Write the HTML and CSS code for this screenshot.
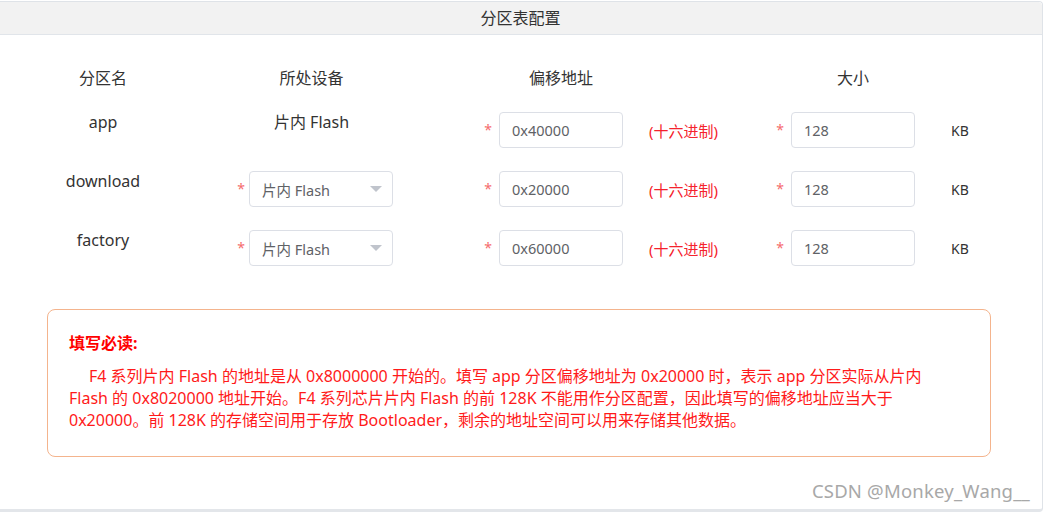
FILE: index.html
```html
<!DOCTYPE html>
<html lang="zh-CN">
<head>
    <meta charset="UTF-8">
    <title>分区表配置</title>
    <link rel="stylesheet" href="styles.css">
</head>
<body>
    <div class="panel">
        <div class="panel-header">分区表配置</div>

        <div class="panel-body">
            <div class="table">
                <!-- header -->
                <div class="th col-name">分区名</div>
                <div class="th col-device">所处设备</div>
                <div class="th col-offset">偏移地址</div>
                <div class="th col-size">大小</div>

                <!-- app -->
                <div class="cell col-name label">app</div>
                <div class="cell col-device label">片内 Flash</div>
                <div class="cell star s-offset">*</div>
                <div class="cell col-offset"><input class="input" value="0x40000"></div>
                <div class="cell hint">(十六进制)</div>
                <div class="cell star s-size">*</div>
                <div class="cell col-size"><input class="input" value="128"></div>
                <div class="cell unit">KB</div>

                <!-- download -->
                <div class="cell col-name label">download</div>
                <div class="cell star s-device">*</div>
                <div class="cell col-select">
                    <div class="select">片内 Flash<span class="arrow"></span></div>
                </div>
                <div class="cell star s-offset">*</div>
                <div class="cell col-offset"><input class="input" value="0x20000"></div>
                <div class="cell hint">(十六进制)</div>
                <div class="cell star s-size">*</div>
                <div class="cell col-size"><input class="input" value="128"></div>
                <div class="cell unit">KB</div>

                <!-- factory -->
                <div class="cell col-name label">factory</div>
                <div class="cell star s-device">*</div>
                <div class="cell col-select">
                    <div class="select">片内 Flash<span class="arrow"></span></div>
                </div>
                <div class="cell star s-offset">*</div>
                <div class="cell col-offset"><input class="input" value="0x60000"></div>
                <div class="cell hint">(十六进制)</div>
                <div class="cell star s-size">*</div>
                <div class="cell col-size"><input class="input" value="128"></div>
                <div class="cell unit">KB</div>
            </div>

            <div class="notice">
                <h3>填写必读:</h3>
                <p>F4 系列片内 Flash 的地址是从 0x8000000 开始的。填写 app 分区偏移地址为 0x20000 时，表示 app 分区实际从片内<br>Flash 的 0x8020000 地址开始。F4 系列芯片片内 Flash 的前 128K 不能用作分区配置，因此填写的偏移地址应当大于<br>0x20000。前 128K 的存储空间用于存放 Bootloader，剩余的地址空间可以用来存储其他数据。</p>
            </div>
        </div>

        <div class="watermark">CSDN @Monkey_Wang__</div>
    </div>
</body>
</html>
```

FILE: styles.css
```css
* {
    margin: 0;
    padding: 0;
    box-sizing: border-box;
    font-family: "Noto Sans", "Noto Sans CJK SC", sans-serif;
}

body {
    background: #fff;
    width: 1046px;
    height: 512px;
    overflow: hidden;
}

.panel {
    position: relative;
    width: 1045px;
    height: 511px;
    margin: 1px 0 0 -2px;
    border: 1px solid #dfe3e8;
    border-bottom: 3px solid #e3e6ea;
    border-radius: 0 4px 4px 0;
    background: #fff;
}

.panel-header {
    height: 33px;
    line-height: 32px;
    text-align: center;
    font-size: 16px;
    color: #333;
    background: #f2f2f2;
    border-bottom: 1px solid #e1e5ea;
    border-radius: 0 4px 0 0;
}

.panel-body {
    padding: 32px 0 0 49px;
}

/* partition table */
.table {
    display: grid;
    grid-template-columns: 110px 74px 17px 144px 85px 21px 124px 147px 21px 124px 80px;
    grid-template-rows: 22px 36px 36px 36px;
    row-gap: 23px;
    color: #333;
}

.th {
    font-size: 16px;
    line-height: 22px;
    text-align: center;
}

.th.col-name { grid-column: 1; }
.th.col-device { grid-column: 3 / 5; padding-right: 2px; }
.th.col-offset { grid-column: 7; }
.th.col-size { grid-column: 10; }

.cell {
    display: flex;
    align-items: center;
}

.cell.col-name { grid-column: 1; }
.cell.col-device { grid-column: 3 / 5; }
.s-device { grid-column: 3; }
.col-select { grid-column: 4; }
.s-offset { grid-column: 6; }
.cell.col-offset { grid-column: 7; }
.hint { grid-column: 8; }
.s-size { grid-column: 9; }
.cell.col-size { grid-column: 10; }
.unit { grid-column: 11; }

.label {
    align-items: flex-start;
    justify-content: center;
    font-size: 16px;
    line-height: 20px;
}

.cell.col-device.label {
    padding-right: 2px;
}

.star {
    justify-content: flex-end;
    padding-right: 7px;
    color: #f56c6c;
    font-size: 14px;
    padding-bottom: 2px;
}

.s-device {
    padding-right: 4px;
}

.input,
.select {
    width: 100%;
    height: 36px;
    border: 1px solid #dcdfe6;
    border-radius: 4px;
    padding: 0 12px;
    font-size: 14.5px;
    color: #606266;
    background: #fff;
    outline: none;
}

.select {
    display: flex;
    align-items: center;
    justify-content: space-between;
}

.arrow {
    width: 0;
    height: 0;
    margin-right: -2px;
    border-left: 6px solid transparent;
    border-right: 6px solid transparent;
    border-top: 6px solid #c0c4cc;
}

.hint {
    padding-left: 26px;
    font-size: 15px;
    color: #f5222d;
}

.unit {
    padding-left: 36px;
    font-size: 14px;
    color: #333;
}

/* notice */
.notice {
    width: 944px;
    height: 148px;
    margin: 43px 0 0 -1px;
    padding: 22px 21px 0 21px;
    border: 1px solid #f4b48d;
    border-radius: 8px;
    color: #ff1a1a;
}

.notice h3 {
    font-size: 16px;
    font-weight: bold;
    line-height: 22px;
    color: #f00;
}

.notice p {
    margin-top: 11px;
    font-size: 16px;
    line-height: 22px;
    text-indent: 20px;
}

.watermark {
    position: absolute;
    right: 12px;
    bottom: 6px;
    font-size: 18.5px;
    color: #a8a8a8;
    letter-spacing: 0.2px;
}
```
